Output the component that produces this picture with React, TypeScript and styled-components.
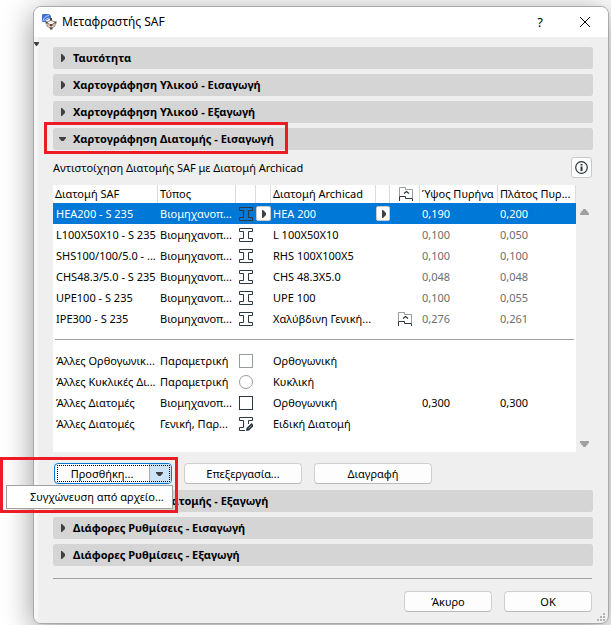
import React from "react";
import styled, { createGlobalStyle, css } from "styled-components";

const Global = createGlobalStyle`
  * { box-sizing: border-box; }
  html { min-height: 100%; background: #fff; }
  body {
    margin: 0;
    overflow: hidden;
    font-family: "Noto Sans", "Open Sans", sans-serif;
    font-size: 11px;
    line-height: 16px;
    color: #000;
  }
  button { font: inherit; color: inherit; padding: 0; margin: 0; }
`;

const Desktop = styled.main`
  padding: 6px 2px 1px 33px;
`;

const Dialog = styled.section`
  position: relative;
  border: 1px solid #a9a9a9;
  border-radius: 8px;
  background: #efefef;
  box-shadow: 0 6px 30px rgba(0, 0, 0, 0.42);
`;

const TitleBar = styled.header`
  display: flex;
  align-items: center;
  height: 30px;
  padding: 0 15px 0 8px;
  border-radius: 7px 7px 0 0;
  background: #fff;
`;

const Title = styled.h1`
  flex: 1;
  margin: 0 0 0 5px;
  font-size: 12px;
  font-weight: 400;
`;

const WindowButton = styled.button`
  display: grid;
  place-items: center;
  width: 16px;
  height: 20px;
  margin-left: 29px;
  border: 0;
  background: none;
  font-size: 13px;
`;

const Body = styled.div`
  padding: 10px 15px 11px 15px;
  border-left: 4px solid #f7f7f7;
  border-radius: 0 0 7px 7px;
`;

const Marker = styled.svg`
  position: absolute;
  left: 0;
  top: 35px;
`;

const Stack = styled.div`
  display: flex;
  flex-direction: column;
  gap: 5px;
`;

const SectionBar = styled.div`
  position: relative;
`;

const SectionButton = styled.button`
  display: flex;
  align-items: center;
  gap: 7px;
  width: 100%;
  height: 22px;
  padding: 0 6px;
  border: 0;
  border-radius: 3px;
  background: #d5d5d5;
  font-weight: 700;
  text-align: left;
  white-space: nowrap;
`;

const highlight = css`
  position: absolute;
  border: 3px solid #ed1c24;
  pointer-events: none;
`;

const SectionHighlight = styled.span`
  ${highlight}
  left: -9px;
  top: -6px;
  width: 244px;
  height: 32px;
`;

const MenuHighlight = styled.span`
  ${highlight}
  z-index: 3;
  left: -54px;
  top: -6px;
  width: 178px;
  height: 56px;
`;

const Caption = styled.div`
  display: flex;
  align-items: center;
  justify-content: space-between;
  height: 35px;
`;

const InfoButton = styled.button`
  display: grid;
  place-items: center;
  width: 21px;
  height: 21px;
  margin-right: 1px;
  border: 1px solid #c9c9c9;
  border-radius: 3px;
  background: #fdfdfd;
`;

const ListFrame = styled.div`
  display: flex;
  height: 267px;
`;

const ListPane = styled.div`
  flex: 1;
  background: #fff;
`;

const Scroller = styled.div`
  display: flex;
  flex-direction: column;
  justify-content: space-between;
  align-items: center;
  width: 17px;
  padding: 24px 0 5px;
`;

const Table = styled.table`
  width: 100%;
  table-layout: fixed;
  border-collapse: separate;
  border-spacing: 0;
`;

const Col = styled.col<{ $w: number }>`
  width: ${(p) => p.$w}px;
`;

const Th = styled.th`
  height: 18px;
  padding: 0 0 0 2px;
  border-right: 1px solid #dcdcdc;
  font-weight: 400;
  text-align: left;
  white-space: nowrap;
  overflow: hidden;
`;

const Row = styled.tr<{ $selected?: boolean }>`
  height: 21px;
  background: ${(p) => (p.$selected ? "#0078d7" : "transparent")};
  color: ${(p) => (p.$selected ? "#fff" : "#000")};
`;

const Td = styled.td<{ $muted?: boolean; $icon?: boolean }>`
  padding: ${(p) => (p.$icon ? 0 : "0 0 0 2px")};
  overflow: hidden;
  text-overflow: ellipsis;
  white-space: nowrap;
  &:first-child { padding-left: 3px; }
  ${(p) => p.$muted && "color: #6d6d6d;"}
`;

const DividerCell = styled.td`
  padding: 0 2px;
`;

const IconBox = styled.span`
  display: flex;
  align-items: center;
  justify-content: center;
`;

const PickButton = styled.button`
  display: grid;
  place-items: center;
  width: 100%;
  height: 15px;
  border: 1px solid #c9c9c9;
  border-radius: 2px;
  background: #fdfdfd;
`;

const Divider = styled.hr`
  margin: 0;
  border: 0;
  border-top: 1px solid #a0a0a0;
`;

const Actions = styled.div`
  position: relative;
  display: flex;
  gap: 12px;
  padding: 11px 1px 6px;
`;

const Button = styled.button<{ $w: number }>`
  width: ${(p) => p.$w}px;
  height: 21px;
  border: 1px solid #d0d0d0;
  border-bottom-color: #bababa;
  border-radius: 4px;
  background: #fdfdfd;
`;

const Split = styled.div`
  position: relative;
  display: flex;
  width: 118px;
  height: 21px;
  border: 1px solid #0078d7;
  border-radius: 4px;
  background: #fdfdfd;
  overflow: hidden;
  &::after {
    content: "";
    position: absolute;
    inset: 1px 1px 1px 2px;
    border: 1px dotted #000;
    pointer-events: none;
  }
`;

const SplitMain = styled.button`
  flex: 1;
  border: 0;
  border-right: 1px solid #b0b0b0;
  background: none;
`;

const SplitArrow = styled.button`
  display: grid;
  place-items: center;
  width: 21px;
  padding-right: 2px;
  border: 0;
  background: #cce4f7;
`;

const SplitWrap = styled.div`
  position: relative;
`;

const Menu = styled.ul`
  position: absolute;
  z-index: 2;
  left: -48px;
  top: 22px;
  width: 167px;
  margin: 0;
  padding: 0;
  border: 1px solid #a0a0a0;
  background: #fff;
  list-style: none;
`;

const MenuItem = styled.button`
  display: block;
  width: 100%;
  height: 22px;
  padding-left: 23px;
  border: 0;
  background: none;
  text-align: left;
  white-space: nowrap;
`;

const Footer = styled.footer`
  display: flex;
  justify-content: flex-end;
  gap: 12px;
  margin: 12px 1px 0 0;
  padding-top: 12px;
  border-top: 1px solid #a0a0a0;
`;

const Grip = styled.svg`
  position: absolute;
  right: 3px;
  bottom: 2px;
`;

const INK = "#2b3840";

const Right = () => (
  <svg width="7" height="8" viewBox="0 0 7 8"><path d="M2 0V8H3L6 5V3L3 0Z" fill="#404040" /></svg>
);
const Down = () => (
  <svg width="7" height="8" viewBox="0 0 7 8"><path d="M0 2H7V3L4.500 6H2.500L0 3Z" fill="#404040" /></svg>
);

const Beam = ({ pencil = false }: { pencil?: boolean }) => (
  <svg width="14" height="14" viewBox="0 0 14 14" fill="none" stroke={INK}>
    {pencil ? (
      <>
        <path d="M9.500 7V3.500H13.500V0.500H0.500V3.500H4.500V10.500H0.500V13.500H6" />
        <path d="M7 14 7.500 11 12.500 6 15 8.500 10 13.500Z" fill={INK} stroke="none" />
        <path d="M9.500 11.500 12.500 8.500" stroke="#8d969b" />
      </>
    ) : (
      <path d="M0.500 0.500H13.500V3.500H9.500V10.500H13.500V13.500H0.500V10.500H4.500V3.500H0.500Z" />
    )}
  </svg>
);
const Square = ({ color }: { color: string }) => (
  <svg width="14" height="14" viewBox="0 0 14 14"><rect x="0.500" y="0.500" width="13" height="13" fill="none" stroke={color} /></svg>
);
const Circle = () => (
  <svg width="14" height="14" viewBox="0 0 14 14"><circle cx="7" cy="7" r="6.500" fill="none" stroke="#979ca0" /></svg>
);
const Flag = () => (
  <svg width="14" height="14" viewBox="0 0 14 14" fill="none">
    <path d="M0.500 9V0.500H6.500V2.500H13.500V11" stroke="#979ca0" />
    <path d="M0.500 14V9.500H6.500V11.500H13.500V14" stroke={INK} />
    <path d="M5 6.500 7.500 4.500 10 6.500" stroke={INK} strokeWidth="1.300" />
  </svg>
);
const AppIcon = () => (
  <svg width="15" height="16" viewBox="0 0 15 16">
    <path d="M0 1Q0 0 1 0H6Q8 0 9 2V4L4 6.500V8H1Q0 8 0 7Z" fill="#3f72d0" />
    <path d="M1 7Q1.500 2.500 7 1.500M2.500 7Q3.500 4.500 7 4" fill="none" stroke="#bdd3f5" />
    <path d="M4.500 8.500 9 6 13.500 8.500 9 11ZM5 9V12L9 14.500 13 12V9M9 11V14" fill="#f6f1ea" stroke="#8c8078" />
    <path d="M8 4H10V6.500H8ZM8 10H10.500V12H8ZM8 13.500H10.500V15.500H8ZM3.500 7.500H5.500V9.500H3.500ZM12.500 7.500H14.500V9.500H12.500Z" fill="#4f4641" />
    <path d="M5.500 10 8 12M12.500 10 10 12" stroke="#d98a6a" />
  </svg>
);

type Kind = "beam" | "beamEdit" | "square" | "squareDark" | "circle";
const shapes: Record<Kind, React.ReactNode> = {
  beam: <Beam />,
  beamEdit: <Beam pencil />,
  square: <Square color="#979ca0" />,
  squareDark: <Square color={INK} />,
  circle: <Circle />,
};

interface Entry {
  saf: string;
  type: string;
  kind: Kind;
  archicad: string;
  h?: string;
  w?: string;
  muted?: boolean;
  flag?: boolean;
  selected?: boolean;
}

const BIO = "Βιομηχανοπ...";
const mapped: Entry[] = [
  { saf: "HEA200 - S 235", type: BIO, kind: "beam", archicad: "HEA 200", h: "0,190", w: "0,200", selected: true },
  { saf: "L100X50X10 - S 235", type: BIO, kind: "beam", archicad: "L 100X50X10", h: "0,100", w: "0,050", muted: true },
  { saf: "SHS100/100/5.0 - ...", type: BIO, kind: "beam", archicad: "RHS 100X100X5", h: "0,100", w: "0,100", muted: true },
  { saf: "CHS48.3/5.0 - S 235", type: BIO, kind: "beam", archicad: "CHS 48.3X5.0", h: "0,048", w: "0,048", muted: true },
  { saf: "UPE100 - S 235", type: BIO, kind: "beam", archicad: "UPE 100", h: "0,100", w: "0,055", muted: true },
  { saf: "IPE300 - S 235", type: BIO, kind: "beam", archicad: "Χαλύβδινη Γενική...", h: "0,276", w: "0,261", muted: true, flag: true },
];
const others: Entry[] = [
  { saf: "Άλλες Ορθογωνικ...", type: "Παραμετρική", kind: "square", archicad: "Ορθογωνική" },
  { saf: "Άλλες Κυκλικές Δι...", type: "Παραμετρική", kind: "circle", archicad: "Κυκλική" },
  { saf: "Άλλες Διατομές", type: BIO, kind: "squareDark", archicad: "Ορθογωνική", h: "0,300", w: "0,300" },
  { saf: "Άλλες Διατομές", type: "Γενική, Παρ...", kind: "beamEdit", archicad: "Ειδική Διατομή" },
];

const EntryRow = ({ e }: { e: Entry }) => (
  <Row $selected={e.selected}>
    <Td>{e.saf}</Td>
    <Td>{e.type}</Td>
    <Td $icon><IconBox>{shapes[e.kind]}</IconBox></Td>
    <Td $icon>{e.selected && <PickButton aria-label="Επιλογή τύπου"><Right /></PickButton>}</Td>
    <Td>{e.archicad}</Td>
    <Td $icon>{e.selected && <PickButton aria-label="Επιλογή διατομής"><Right /></PickButton>}</Td>
    <Td $icon>{e.flag && <IconBox><Flag /></IconBox>}</Td>
    <Td $muted={e.muted}>{e.h}</Td>
    <Td $muted={e.muted}>{e.w}</Td>
  </Row>
);

const Section = ({ label, open = false }: { label: string; open?: boolean }) => (
  <SectionBar>
    <SectionButton aria-expanded={open}>
      {open ? <Down /> : <Right />}
      {label}
    </SectionButton>
    {open && <SectionHighlight />}
  </SectionBar>
);

const widths = [105, 78, 20, 15, 105, 14, 30, 78, 78];

export default function App() {
  return (
    <Desktop>
      <Global />
      <Dialog aria-label="Μεταφραστής SAF">
        <TitleBar>
          <AppIcon />
          <Title>Μεταφραστής SAF</Title>
          <WindowButton aria-label="Βοήθεια">?</WindowButton>
          <WindowButton aria-label="Κλείσιμο">
            <svg width="12" height="12" viewBox="0 0 12 12"><path d="M1 1 11 11M11 1 1 11" stroke="#000" /></svg>
          </WindowButton>
        </TitleBar>
        <Marker width="5" height="4" viewBox="0 0 5 4"><path d="M0 0H5V1L3 4H2L0 1Z" fill="#404040" /></Marker>
        <Body>
          <Stack>
            <Section label="Ταυτότητα" />
            <Section label="Χαρτογράφηση Υλικού - Εισαγωγή" />
            <Section label="Χαρτογράφηση Υλικού - Εξαγωγή" />
            <Section label="Χαρτογράφηση Διατομής - Εισαγωγή" open />
          </Stack>
          <Caption>
            <span>Αντιστοίχηση Διατομής SAF με Διατομή Archicad</span>
            <InfoButton aria-label="Πληροφορίες">
              <svg width="13" height="13" viewBox="0 0 13 13" fill="none" stroke={INK}>
                <circle cx="6.500" cy="6.500" r="5.800" strokeWidth="1.200" />
                <path d="M6.500 3V4.500M6.500 5.500V10" strokeWidth="2" />
              </svg>
            </InfoButton>
          </Caption>
          <ListFrame>
            <ListPane>
              <Table>
                <colgroup>{widths.map((w, i) => <Col key={i} $w={w} />)}</colgroup>
                <thead>
                  <tr>
                    <Th>Διατομή SAF</Th>
                    <Th>Τύπος</Th>
                    <Th />
                    <Th />
                    <Th>Διατομή Archicad</Th>
                    <Th />
                    <Th><IconBox><Flag /></IconBox></Th>
                    <Th>Ύψος Πυρήνα</Th>
                    <Th>Πλάτος Πυρ...</Th>
                  </tr>
                </thead>
                <tbody>
                  {mapped.map((e, i) => <EntryRow key={i} e={e} />)}
                  <Row><DividerCell colSpan={9}><Divider /></DividerCell></Row>
                  {others.map((e, i) => <EntryRow key={i} e={e} />)}
                </tbody>
              </Table>
            </ListPane>
            <Scroller>
              <svg width="9" height="6" viewBox="0 0 9 6"><path d="M3.500 0H5.500L9 4.500V6H0V4.500Z" fill="#a0a0a0" /></svg>
              <svg width="9" height="6" viewBox="0 0 9 6"><path d="M0 0H9V1.500L5.500 6H3.500L0 1.500Z" fill="#a0a0a0" /></svg>
            </Scroller>
          </ListFrame>
          <Actions>
            <SplitWrap>
              <Split>
                <SplitMain>Προσθήκη...</SplitMain>
                <SplitArrow aria-label="Περισσότερα" aria-expanded><Down /></SplitArrow>
              </Split>
              <Menu><li><MenuItem>Συγχώνευση από αρχείο...</MenuItem></li></Menu>
              <MenuHighlight />
            </SplitWrap>
            <Button $w={118}>Επεξεργασία...</Button>
            <Button $w={118}>Διαγραφή</Button>
          </Actions>
          <Stack>
            <Section label="Χαρτογράφηση Διατομής - Εξαγωγή" />
            <Section label="Διάφορες Ρυθμίσεις - Εισαγωγή" />
            <Section label="Διάφορες Ρυθμίσεις - Εξαγωγή" />
          </Stack>
          <Footer>
            <Button $w={88}>Άκυρο</Button>
            <Button $w={88}>OK</Button>
          </Footer>
        </Body>
        <Grip width="8" height="8" viewBox="0 0 8 8" fill="#b5b5b5">
          <path d="M6 0h2v2h-2zM3 3h2v2h-2zM6 3h2v2h-2zM0 6h2v2h-2zM3 6h2v2h-2zM6 6h2v2h-2z" />
        </Grip>
      </Dialog>
    </Desktop>
  );
}
